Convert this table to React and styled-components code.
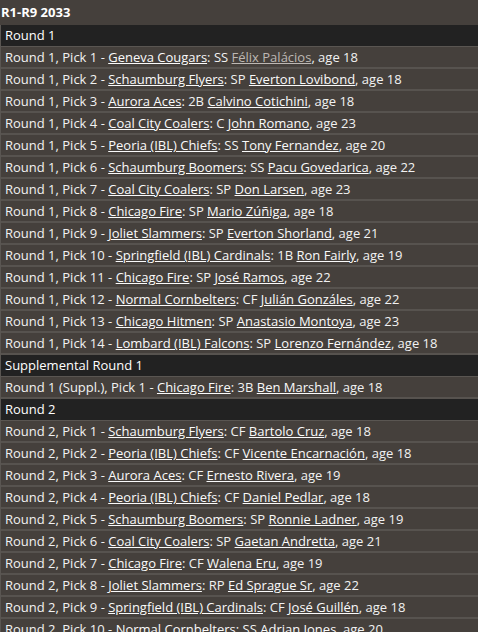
import React from 'react';
import styled, { createGlobalStyle } from 'styled-components';

const Global = createGlobalStyle`
  html, body {
    margin: 0;
    padding: 0;
    background: #45403c;
  }
  body {
    font-family: "Open Sans", "Noto Sans", sans-serif;
    font-size: 13px;
    color: #f2f2f2;
  }
`;

const Title = styled.div`
  height: 25px;
  line-height: 24px;
  padding-left: 1px;
  font-weight: bold;
  color: #fff;
`;

const List = styled.div`
  display: flex;
  flex-direction: column;
  border-left: 1px solid #5a5652;
`;

const Header = styled.div`
  height: 21px;
  line-height: 21px;
  padding-left: 4px;
  background: #222222;
  color: #fff;
  border-bottom: 1px solid #5a5652;
`;

const Row = styled.div`
  height: 20px;
  line-height: 20px;
  padding-left: 4px;
  border-bottom: 2px solid #57534f;
  white-space: nowrap;
`;

const Link = styled.a`
  color: ${p => (p.visited ? '#bdb8b4' : '#fafafa')};
  text-decoration: underline;
`;

const draft = [
  { name: 'Round 1', picks: [
    ['Round 1, Pick 1', 'Geneva Cougars', 'SS', 'Félix Palácios', 18, true],
    ['Round 1, Pick 2', 'Schaumburg Flyers', 'SP', 'Everton Lovibond', 18],
    ['Round 1, Pick 3', 'Aurora Aces', '2B', 'Calvino Cotichini', 18],
    ['Round 1, Pick 4', 'Coal City Coalers', 'C', 'John Romano', 23],
    ['Round 1, Pick 5', 'Peoria (IBL) Chiefs', 'SS', 'Tony Fernandez', 20],
    ['Round 1, Pick 6', 'Schaumburg Boomers', 'SS', 'Pacu Govedarica', 22],
    ['Round 1, Pick 7', 'Coal City Coalers', 'SP', 'Don Larsen', 23],
    ['Round 1, Pick 8', 'Chicago Fire', 'SP', 'Mario Zúñiga', 18],
    ['Round 1, Pick 9', 'Joliet Slammers', 'SP', 'Everton Shorland', 21],
    ['Round 1, Pick 10', 'Springfield (IBL) Cardinals', '1B', 'Ron Fairly', 19],
    ['Round 1, Pick 11', 'Chicago Fire', 'SP', 'José Ramos', 22],
    ['Round 1, Pick 12', 'Normal Cornbelters', 'CF', 'Julián Gonzáles', 22],
    ['Round 1, Pick 13', 'Chicago Hitmen', 'SP', 'Anastasio Montoya', 23],
    ['Round 1, Pick 14', 'Lombard (IBL) Falcons', 'SP', 'Lorenzo Fernández', 18],
  ] },
  { name: 'Supplemental Round 1', picks: [
    ['Round 1 (Suppl.), Pick 1', 'Chicago Fire', '3B', 'Ben Marshall', 18],
  ] },
  { name: 'Round 2', picks: [
    ['Round 2, Pick 1', 'Schaumburg Flyers', 'CF', 'Bartolo Cruz', 18],
    ['Round 2, Pick 2', 'Peoria (IBL) Chiefs', 'CF', 'Vicente Encarnación', 18],
    ['Round 2, Pick 3', 'Aurora Aces', 'CF', 'Ernesto Rivera', 19],
    ['Round 2, Pick 4', 'Peoria (IBL) Chiefs', 'CF', 'Daniel Pedlar', 18],
    ['Round 2, Pick 5', 'Schaumburg Boomers', 'SP', 'Ronnie Ladner', 19],
    ['Round 2, Pick 6', 'Coal City Coalers', 'SP', 'Gaetan Andretta', 21],
    ['Round 2, Pick 7', 'Chicago Fire', 'CF', 'Walena Eru', 19],
    ['Round 2, Pick 8', 'Joliet Slammers', 'RP', 'Ed Sprague Sr', 22],
    ['Round 2, Pick 9', 'Springfield (IBL) Cardinals', 'CF', 'José Guillén', 18],
    ['Round 2, Pick 10', 'Normal Cornbelters', 'SS', 'Adrian Jones', 20],
  ] },
];

export default function App() {
  return (
    <>
      <Global />
      <Title>R1-R9 2033</Title>
      <List>
        {draft.map(round => (
          <React.Fragment key={round.name}>
            <Header>{round.name}</Header>
            {round.picks.map(([pick, team, pos, player, age, visited]) => (
              <Row key={pick}>
                {pick} - <Link href="#">{team}</Link>: {pos} <Link href="#" visited={visited ? 1 : 0}>{player}</Link>, age {age}
              </Row>
            ))}
          </React.Fragment>
        ))}
      </List>
    </>
  );
}
